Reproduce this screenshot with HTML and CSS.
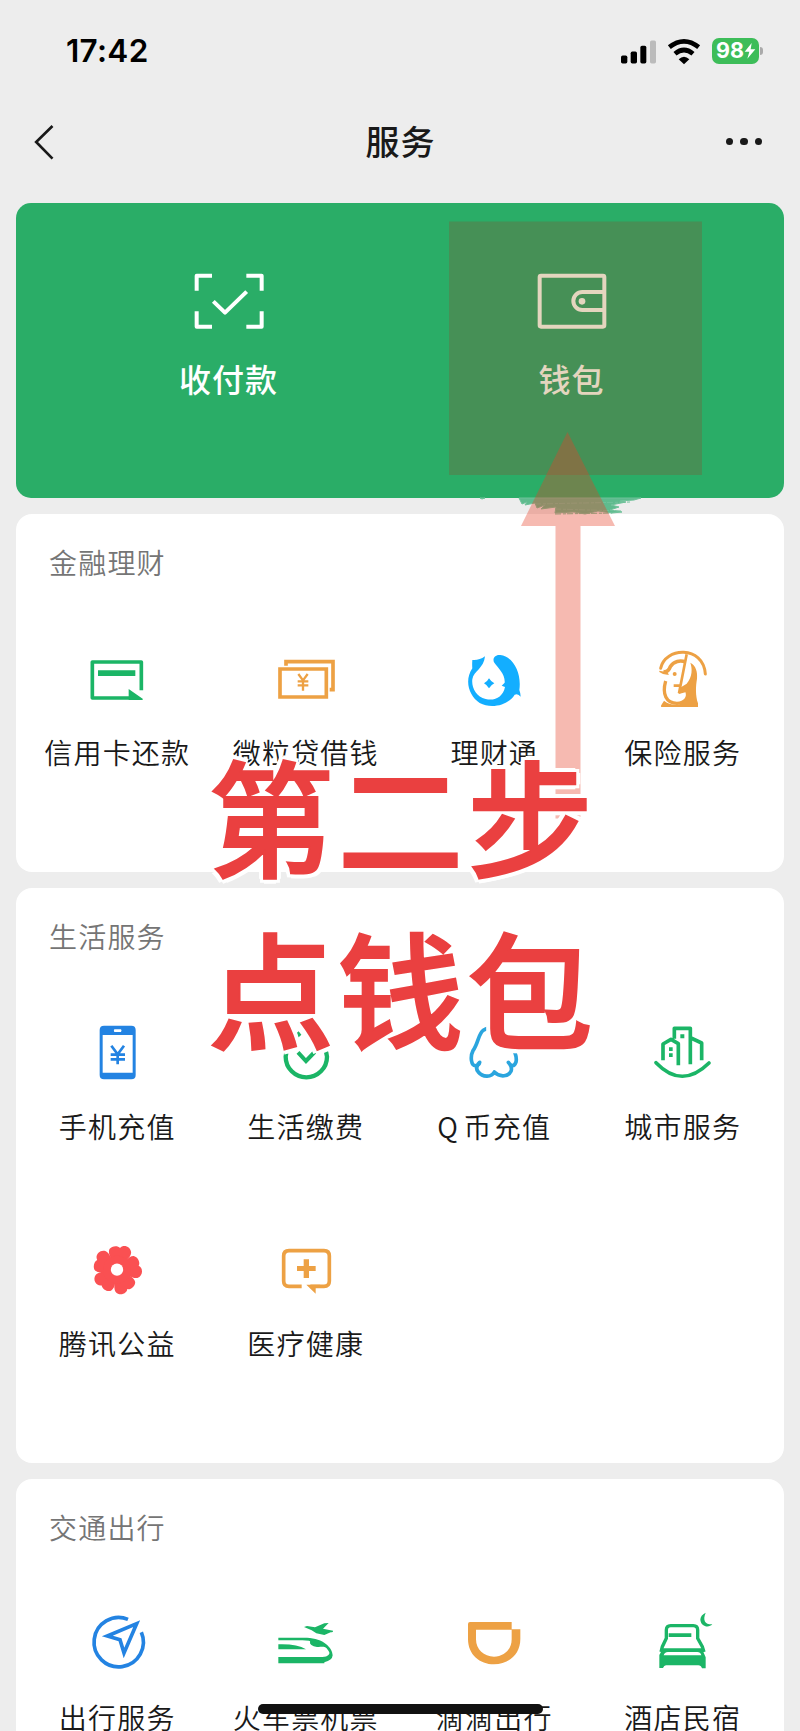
FILE: index.html
```html
<!DOCTYPE html>
<html lang="zh-CN">
<head>
<meta charset="utf-8">
<title>服务</title>
<link rel="stylesheet" href="styles.css">
</head>
<body>
<div class="phone">
  <header class="status">
    <span class="time">17:42</span>
    <div class="indicators">
      <svg class="signal" viewBox="660 110 108 80"><rect x="660" y="162" width="19" height="24" rx="5"/><rect x="689" y="150" width="19" height="36" rx="5"/><rect x="718" y="133" width="18" height="53" rx="5"/><rect x="747" y="117" width="18" height="69" rx="5" fill="#bbb"/></svg>
      <svg class="wifi" viewBox="798 110 102 80"><path d="M805 137Q849 102 893 137M822 157Q849 134 876 157" fill="none" stroke="#000" stroke-width="14"/><path d="M833 173Q849 158 865 173L849 188Z"/></svg>
      <div class="battery"><span>98</span><svg class="bolt" viewBox="1030 134 36 48"><path d="M1053 134L1032 160H1046L1040 181L1064 153H1050Z"/></svg></div>
      <i class="battery-tip"></i>
    </div>
  </header>

  <nav class="navbar">
    <svg class="back" viewBox="102 370 62 108"><path d="M157 376L108 424L157 474" fill="none" stroke="#191919" stroke-width="8"/></svg>
    <h1>服务</h1>
    <div class="more"><i></i><i></i><i></i></div>
  </nav>

  <main class="cards">
    <section class="hero">
      <div class="hero-item">
        <svg class="hero-icon" viewBox="577 235 216 198"><path d="M634 258H588V303M737 258H783V303M588 365V411H634M737 411H783V365" fill="none" stroke="currentColor" stroke-width="12" stroke-linejoin="round"/><path d="M638 335L673 369L738 306" fill="none" stroke="currentColor" stroke-width="12" stroke-linejoin="round"/></svg>
        <span>收付款</span>
      </div>
      <div class="hero-item wallet">
        <svg class="hero-icon" viewBox="407 235 216 198"><rect x="418" y="258" width="194" height="153" rx="4" fill="none" stroke="currentColor" stroke-width="12"/><path d="M612 307H546A27 27 0 0 0 546 361H612" fill="none" stroke="currentColor" stroke-width="12"/><circle cx="545" cy="335" r="10" fill="currentColor"/></svg>
        <span>钱包</span>
      </div>
    </section>

    <section class="card">
      <h2>金融理财</h2>
      <div class="grid">
        <div class="item">
          <svg class="icon green" viewBox="256 411 192 192"><path class="line" d="M425 541V456H278V564H392" stroke-width="11" stroke-linejoin="round"/><path d="M387 537L430 567L428 570H387ZM295 481H407V498H295Z"/></svg>
          <span>信用卡还款</span>
        </div>
        <div class="item">
          <svg class="icon orange" viewBox="821 411 192 192"><path class="line" d="M857 467V455H998V539H988M839 477H978V561H839Z" stroke-width="11"/><path class="line" d="M894 492L908 511L922 492M908 511V542M892 514H924M892 526H924" stroke-width="7"/></svg>
          <span>微粒贷借钱</span>
        </div>
        <div class="item">
          <svg class="icon sky" viewBox="187 411 192 192"><path d="M256 439Q238 452 218 450Q217 466 218 475C193 512 208 558 240 579C275 598 326 586 345 554Q355 549 363 560Q362 547 359 540C366 492 344 441 302 435C285 433 277 447 284 458C296 475 317 492 315 518L306 527L316 531C310 561 285 574 258 567C229 560 215 532 218 508C222 483 253 475 256 439Z"/><path d="M268 505Q274 515 284 520Q274 525 268 535Q262 525 253 520Q263 515 268 505Z"/></svg>
          <span>理财通</span>
        </div>
        <div class="item">
          <svg class="icon orange" viewBox="752 411 192 192"><path class="line" d="M781 475C793 411 909 405 915 492" stroke-width="9" stroke-linecap="round"/><path class="line" d="M789 485C800 487 806 481 810 470C820 453 840 450 856 456" stroke-width="11"/><path d="M777 482L801 487L806 494Q790 496 777 486Z"/><path class="line" d="M796 513C785 552 797 580 830 580C855 579 866 562 860 545" stroke-width="10"/><path d="M870 458C887 467 892 486 890 506C886 530 885 556 893 580V591H784C778 588 787 581 791 572Q806 585 830 584C853 581 865 568 865 552C860 542 848 550 835 552L837 535L859 521C877 500 876 475 870 458Z"/><path class="line" d="M859 433L836 550M820 527H840" stroke-width="8"/><circle cx="823" cy="492" r="6"/></svg>
          <span>保险服务</span>
        </div>
      </div>
    </section>

    <section class="card">
      <h2>生活服务</h2>
      <div class="grid">
        <div class="item">
          <svg class="icon blue" viewBox="256 423 192 192"><path fill-rule="evenodd" d="M313 437H395Q408 437 408 450V585Q408 598 395 598H313Q300 598 300 585V450Q300 437 313 437ZM309 465V578H399V465ZM344 448Q341 452 344 456H364Q367 452 364 448Z"/><path class="line" d="M335 497L354 523L373 497M354 523V553M333 524H376M333 538H376" stroke-width="8"/></svg>
          <span>手机充值</span>
        </div>
        <div class="item">
          <svg class="icon green" viewBox="821 423 192 192"><path class="line" d="M899 459Q857 493 856 530A62 62 0 0 0 980 530Q978 505 956 484" stroke-width="13"/><path class="line" d="M893 517L917 543L943 516" stroke-width="12"/></svg>
          <span>生活缴费</span>
        </div>
        <div class="item">
          <svg class="icon azure" viewBox="187 423 192 192"><path class="line" d="M251 451C236 461 236 490 220 512C211 530 214 560 229 557Q238 556 240 547Q224 563 236 576C248 591 275 594 284 576C302 594 327 589 334 574Q339 561 326 547Q341 567 349 546C353 530 342 505 332 494C329 465 322 446 284 441Q266 441 251 451" stroke-width="11" stroke-linejoin="round"/></svg>
          <span class="latin-lead">Q 币充值</span>
        </div>
        <div class="item">
          <svg class="icon green" viewBox="752 423 192 192"><path class="line" d="M788 541V492L812 478L834 491V556M822 476V445H870V553M872 474L904 489V541" stroke-width="11" stroke-linejoin="round"/><path class="line" d="M767 548Q845 629 926 549" stroke-width="11" stroke-linecap="round"/><path d="M840 463H852V475H840ZM806 502H817V513H806ZM806 520H817V531H806Z"/></svg>
          <span>城市服务</span>
        </div>
        <div class="item">
          <svg class="icon red" viewBox="256 114 192 192">
            <defs><path id="petal" d="M0 -8C-16 -20 -36 -42 -31 -58C-26 -69 -8 -73 0 -66C9 -79 32 -74 35 -56C36 -41 16 -20 0 -8Z"/></defs>
            <g transform="translate(352 209)"><use href="#petal" transform="rotate(8)"/><use href="#petal" transform="rotate(80)"/><use href="#petal" transform="rotate(152)"/><use href="#petal" transform="rotate(224)"/><use href="#petal" transform="rotate(296)"/><circle r="42"/><circle r="18.500" fill="#fff"/></g>
          </svg>
          <span>腾讯公益</span>
        </div>
        <div class="item">
          <svg class="icon orange" viewBox="821 114 192 192"><path class="line" d="M904 259H866Q850 259 850 243V168Q850 152 866 152H971Q987 152 987 168V243Q987 259 971 259H930" stroke-width="11"/><path d="M918 254H960L946 265V281ZM910 178H926V198H946V213H926V234H910V213H890V198H910Z"/></svg>
          <span>医疗健康</span>
        </div>
      </div>
    </section>

    <section class="card">
      <h2>交通出行</h2>
      <div class="grid">
        <div class="item">
          <svg class="icon blue" viewBox="256 396 192 192"><path class="line" d="M385 418A74 74 0 1 0 425 457" stroke-width="11"/><path class="line" d="M411 431L323 468L361 479L373 519Z" stroke-width="11"/></svg>
          <span>出行服务</span>
        </div>
        <div class="item">
          <svg class="icon green" viewBox="821 396 192 192"><path d="M911 441L920 438L944 442L972 430L985 429L968 446L998 452Q999 457 991 457L972 465L948 460L934 451ZM834 473H920C969 475 997 503 997 526Q996 541 972 547V550H834V531H966C984 530 990 521 986 515C975 497 974 500 950 501Q927 497 929 486Q934 481 906 481H834ZM834 493Q889 491 917 508H834Z"/></svg>
          <span>火车票机票</span>
        </div>
        <div class="item">
          <svg class="icon orange" viewBox="187 396 192 192"><path fill-rule="evenodd" d="M211 426H336V448H362V477C362 524 326 553 283 553C240 553 205 524 205 477V432Q205 426 211 426ZM229 449V478C229 509 253 530 283 530C313 530 336 509 336 478V449Z"/></svg>
          <span>滴滴出行</span>
        </div>
        <div class="item">
          <svg class="icon green" viewBox="752 396 192 192"><path class="line" d="M782 516L786 500L798 475V450Q798 437 811 437H879Q892 437 892 450V475L906 500L911 516" stroke-width="10"/><path d="M805 460H873V471H805ZM788 505H904L916 532V565H905Q902 556 894 556H797Q791 557 788 564H777V525ZM790 526H903Q900 516 891 516H803Q792 517 790 526Z" fill-rule="evenodd"/><path d="M916 398C906 422 915 434 936 433C925 445 902 440 900 419Q900 406 916 398Z"/></svg>
          <span>酒店民宿</span>
        </div>
      </div>
    </section>
  </main>

  <svg class="marks" viewBox="0 0 800 1731">
    <path class="smear" d="M480 498L482 499L485 498ZM519 498L522 504L527 502L525 505L535 503L537 508L545 505L541 509L556 507L555 513L574 512L585 514L598 511L612 513L622 512L610 510L619 507L611 505L626 502L620 501L634 500L641 498Z"/>
    <path class="smear" stroke-dasharray="6 2 3 1" d="M535 504L631 502M555 509L622 511M555 514L612 513"/>
    <rect class="highlight" x="449" y="221.5" width="253" height="253.5"/>
    <path class="arrow" d="M567.5 432L615 526H580.5V818.5H555.5V526H521Z"/>
  </svg>
  <div class="caption">第二步<br>点钱包</div>
  <div class="home-bar"></div>
</div>
</body>
</html>
```
FILE: styles.css
```css
* { box-sizing: border-box; }
body { margin: 0; background: #ededed; }
h1, h2 { margin: 0; }
svg { display: block; flex: none; }

.phone {
  position: relative;
  width: 800px;
  height: 1731px;
  overflow: hidden;
  color: #191919;
  font-family: "Noto Sans CJK SC", sans-serif;
}

.status {
  display: flex;
  justify-content: space-between;
  align-items: center;
  height: 102px;
  padding: 0 37px 0 66px;
}
.time { color: #000; font: 600 31.5px/1 Inter, sans-serif; letter-spacing: .3px; }
.indicators { display: flex; align-items: center; }
.signal { width: 36px; height: 27px; }
.wifi { width: 34px; height: 27px; margin-left: 10px; }
.battery {
  display: flex;
  align-items: center;
  width: 47px;
  height: 26px;
  margin-left: 11px;
  padding-left: 4px;
  border-radius: 7px;
  background: #3dbd59;
  color: #fff;
  font: 700 21.5px/1 Inter, sans-serif;
}
.bolt { width: 12px; height: 16px; fill: #fff; }
.battery-tip { width: 3px; height: 8px; margin-left: 1px; border-radius: 0 3px 3px 0; background: #aaa; }

.navbar {
  display: grid;
  grid-template-columns: 100px 1fr 100px;
  align-items: center;
  height: 101px;
  padding: 0 38px 22px 34px;
}
.back { width: 21px; height: 36px; }
.navbar h1 { padding: 0 0 2px 5px; font-size: 34px; font-weight: 500; line-height: 50px; letter-spacing: 1px; text-align: center; }
.more { display: flex; justify-content: flex-end; gap: 7px; }
.more i { width: 7.5px; height: 7.5px; border-radius: 50%; background: #191919; }

.cards { display: flex; flex-direction: column; gap: 16px; padding: 0 16px; }
.hero {
  display: grid;
  grid-template-columns: 1fr 1fr;
  height: 295px;
  padding: 65px 41px 0;
  border-radius: 15px;
  background: #2aad67;
  color: #fff;
}
.hero-item { display: flex; flex-direction: column; align-items: center; font-size: 32px; font-weight: 500; line-height: 48px; letter-spacing: 1px; }
.wallet { color: #e8ffe4; }
.hero-icon { width: 72px; height: 66px; margin-bottom: 20px; }

.card { flex: none; padding: 0 7px 51px; border-radius: 16px; background: #fff; }
.card h2 { height: 90px; padding: 28px 0 0 26px; color: #757575; font-size: 28px; font-weight: 350; line-height: 40px; letter-spacing: 1.2px; }
.grid { display: grid; grid-template-columns: repeat(4, 1fr); grid-auto-rows: 217px; }
.item { display: flex; flex-direction: column; align-items: center; padding-top: 43px; font-size: 28px; font-weight: 350; line-height: 40px; letter-spacing: 1.2px; white-space: nowrap; }
.icon { width: 64px; height: 64px; margin-bottom: 21px; fill: currentColor; }
.latin-lead { word-spacing: -3px; }
.line { fill: none; stroke: currentColor; }
.green { color: #1bb566; }
.orange { color: #eda144; }
.sky { color: #13aeff; }
.azure { color: #2aa5de; }
.blue { color: #2383e2; }
.red { color: #fa5052; }

.marks { position: absolute; inset: 0; width: 800px; height: 1731px; }
.smear { fill: #5fbb8e; stroke: #6fc29a; stroke-width: 1; }
.highlight { fill: rgba(215, 0, 0, .165); }
.arrow { fill: rgba(230, 65, 40, .36); }
.caption {
  position: absolute;
  top: 727px;
  left: 208px;
  color: #ea4040;
  font-size: 126px;
  font-weight: 500;
  line-height: 172px;
  letter-spacing: 3.5px;
  white-space: nowrap;
  -webkit-text-stroke: 2px #ea4040;
  text-shadow: 5px 0 #fff, -5px 0 #fff, 0 5px #fff, 0 -5px #fff, 4px 4px #fff, -4px 4px #fff, 4px -4px #fff, -4px -4px #fff;
}
.home-bar { position: absolute; top: 1704px; left: 258px; width: 285px; height: 10px; border-radius: 5px; background: #111; }
```
